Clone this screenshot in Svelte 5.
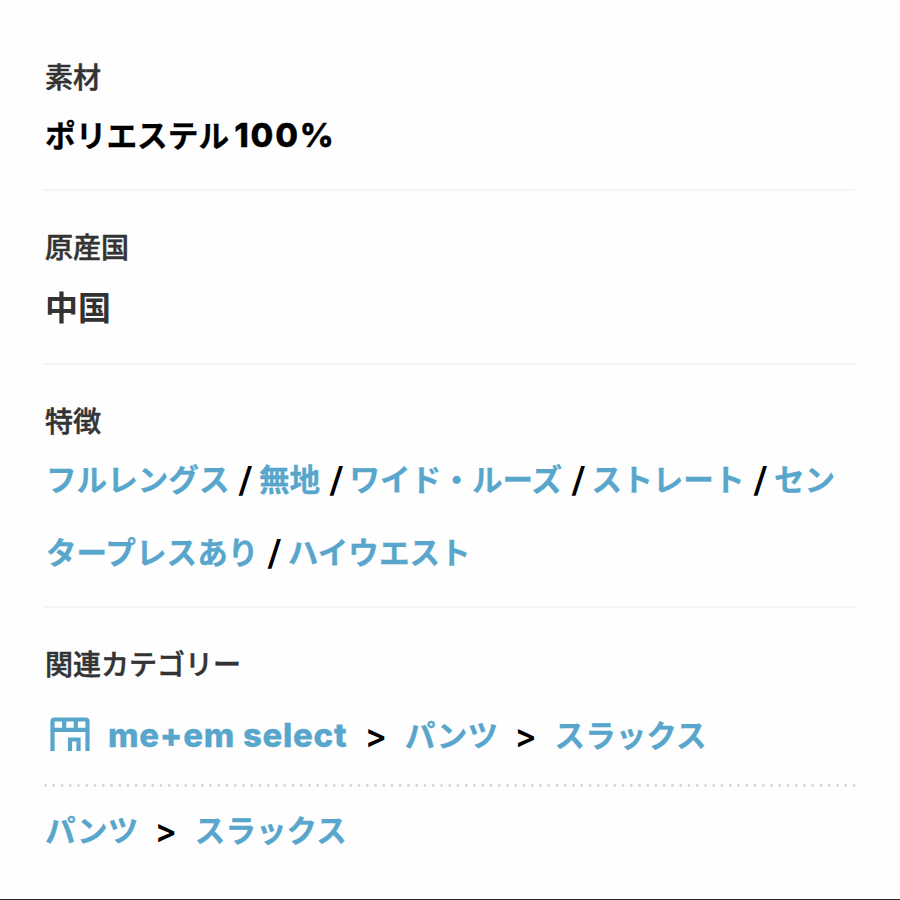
<script lang="ts">
  const features = [
    "フルレングス",
    "無地",
    "ワイド・ルーズ",
    "ストレート",
    "センタープレスあり",
    "ハイウエスト",
  ];
  const subCategories = ["パンツ", "スラックス"];
</script>

<main class="details">
  <section class="material">
    <h2>素材</h2>
    <p>ポリエステル<span class="amount">100%</span></p>
  </section>

  <section class="origin">
    <h2>原産国</h2>
    <p>中国</p>
  </section>

  <section class="features">
    <h2>特徴</h2>
    <p>
      {#each features as feature, i}{#if i > 0}<span class="slash">/</span>{/if}<a href="#feature">{feature}</a>{/each}
    </p>
  </section>

  <section class="categories">
    <h2>関連カテゴリー</h2>
    <nav class="crumbs shop">
      <svg class="shop-icon" viewBox="0 0 40 36" fill="none" aria-hidden="true">
        <path d="M2.5 34V4.5Q2.5 2.5 4.5 2.5H35.5Q37.5 2.5 37.5 4.5V34M2.5 12.8H37.5M14.2 2.5V13M25.8 2.5V13" />
        <path d="M20 34V22.5H28.5V34" />
      </svg>
      <a class="brand" href="#brand">me+em select</a>
      {#each subCategories as category}
        <span class="arrow">&gt;</span>
        <a href="#category">{category}</a>
      {/each}
    </nav>
    <svg class="dots" viewBox="0 0 812 3" aria-hidden="true">
      <line x1="1.5" y1="1.5" x2="811" y2="1.5" />
    </svg>
    <nav class="crumbs">
      {#each subCategories as category, i}
        {#if i > 0}<span class="arrow">&gt;</span>{/if}
        <a href="#category">{category}</a>
      {/each}
    </nav>
  </section>
</main>

<style>
  :global(body) {
    background: #fefefe;
  }

  .details {
    box-sizing: border-box;
    height: 900px;
    padding: 21px 45px 0 44px;
    overflow: hidden;
    border-bottom: 1px solid #2c2c30;
    color: #000;
    font-family: Inter, "Noto Sans CJK JP", sans-serif;
  }

  section {
    padding-top: 38px;
    border-bottom: 2px solid #f4f4f4;
  }

  h2 {
    margin: 0;
    padding-left: 1px;
    color: #333;
    font-size: 28px;
    font-weight: 500;
    line-height: 38px;
    padding-bottom: 2px;
    -webkit-text-stroke: 0.5px #333;
  }

  p {
    margin: 0;
    padding-left: 1px;
    font-size: 30.7px;
    font-weight: 700;
    line-height: 73px;
  }

  a {
    color: #58a6cc;
    text-decoration: none;
    -webkit-text-stroke: 0.3px #58a6cc;
  }

  .material {
    height: 130px;
  }

  .material p {
    -webkit-text-stroke: 0.3px #000;
  }

  .amount {
    margin-left: 5px;
    font-size: 33px;
    font-weight: 800;
    letter-spacing: 1.8px;
  }

  .origin {
    height: 134px;
  }

  .origin p {
    padding-top: 3px;
    color: #333;
    font-size: 33px;
  }

  .features {
    height: 203px;
  }

  .features p {
    padding-left: 2px;
    margin-right: -5px;
    font-size: 30.6px;
  }

  .slash {
    display: inline-block;
    margin: 0 7px 0 9.5px;
    font-size: 34px;
    font-weight: 600;
    line-height: 40px;
    transform: translateY(1px) skewX(-3deg);
  }

  .categories {
    border-bottom: 0;
  }

  .crumbs {
    display: flex;
    align-items: center;
    height: 86px;
    padding-left: 1px;
    font-size: 30.6px;
    font-weight: 700;
    line-height: 73px;
  }

  .shop {
    height: 98px;
  }

  .shop-icon {
    width: 40px;
    height: 36px;
    margin: 0 18px 0 5px;
    stroke: #58a6cc;
    stroke-width: 4.2;
  }

  .brand {
    margin-right: 1px;
    font-size: 33px;
    font-weight: 800;
    letter-spacing: 0.7px;
  }

  .arrow {
    width: 22px;
    margin: 2px 18px 0 16.5px;
    font-size: 33px;
    font-weight: 600;
    text-align: center;
  }

  .dots {
    display: block;
    width: 812px;
    height: 3px;
    stroke: #d5d5d5;
    stroke-width: 2.8;
    stroke-linecap: round;
    stroke-dasharray: 0 8.25;
  }
</style>
